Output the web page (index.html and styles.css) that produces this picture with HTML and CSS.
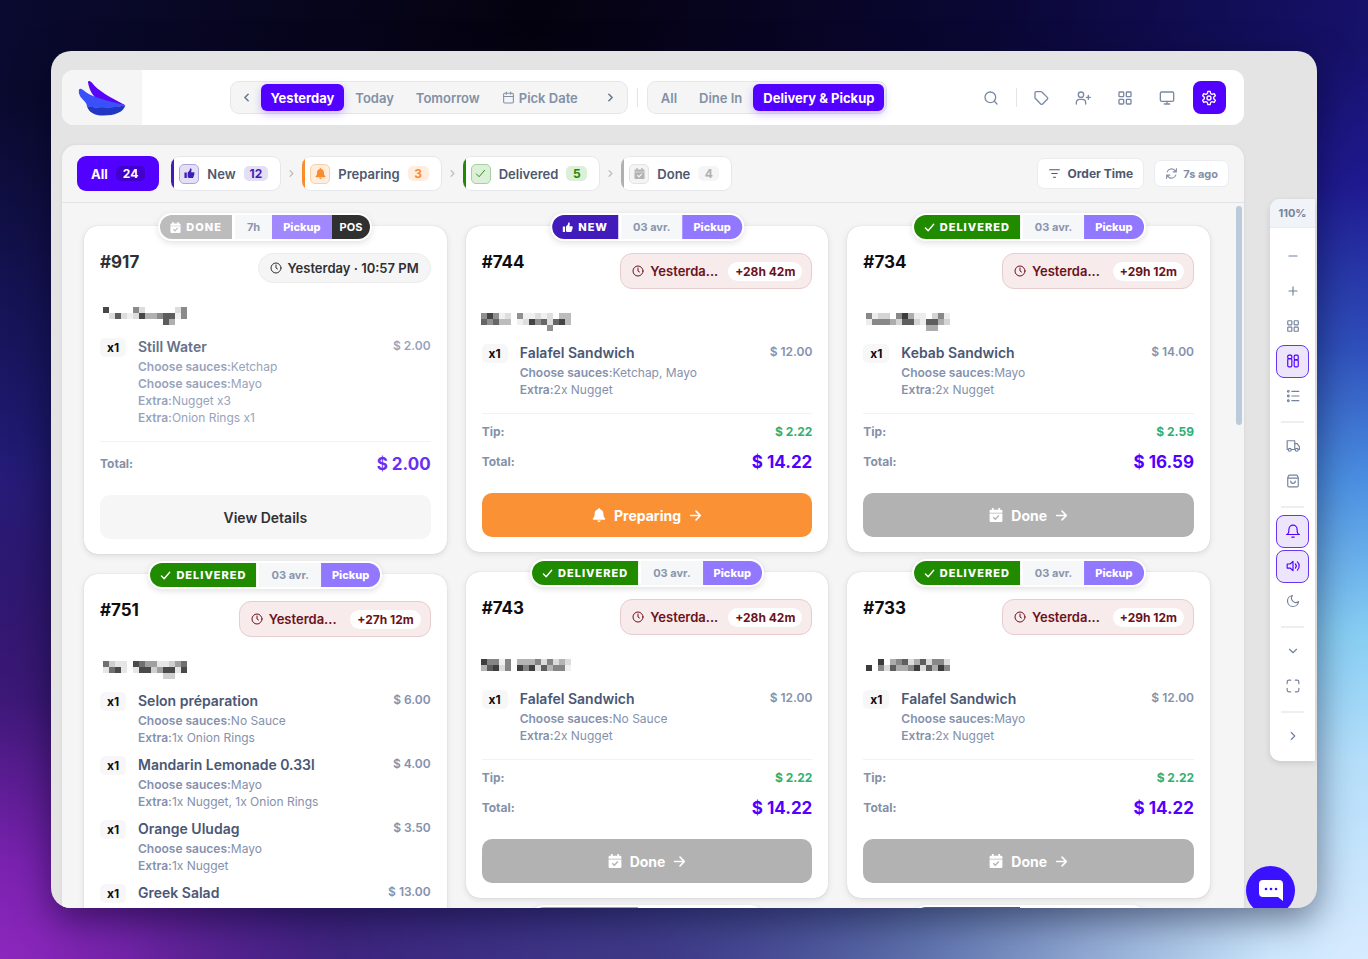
FILE: index.html
```html
<!DOCTYPE html>
<html lang="en">
<head>
<meta charset="UTF-8">
<meta name="viewport" content="width=device-width, initial-scale=1.0">
<title>Orders</title>
<link rel="stylesheet" href="styles.css">
</head>
<body>
<svg class="sprite" aria-hidden="true">
  <symbol id="i-left" viewBox="0 0 24 24"><path d="M15 6l-6 6 6 6"/></symbol>
  <symbol id="i-right" viewBox="0 0 24 24"><path d="M9 6l6 6-6 6"/></symbol>
  <symbol id="i-down" viewBox="0 0 24 24"><path d="M6 9l6 6 6-6"/></symbol>
  <symbol id="i-calendar" viewBox="0 0 24 24"><rect x="3" y="4" width="18" height="18" rx="2"/><path d="M16 2v4M8 2v4M3 10h18"/></symbol>
  <symbol id="i-search" viewBox="0 0 24 24"><circle cx="11" cy="11" r="8"/><path d="M21 21l-4-4"/></symbol>
  <symbol id="i-tag" viewBox="0 0 24 24"><path d="M3 4v7.500a2 2 0 0 0 .6 1.400l8 8a2 2 0 0 0 2.800 0l7-7a2 2 0 0 0 0-2.800l-8-8A2 2 0 0 0 12 2.500H4.500A1.500 1.500 0 0 0 3 4z"/></symbol>
  <symbol id="i-user" viewBox="0 0 24 24"><circle cx="9" cy="7" r="4"/><path d="M2 21v-2a5 5 0 0 1 5-5h4a5 5 0 0 1 5 5v2M20 8v6M17 11h6"/></symbol>
  <symbol id="i-grid" viewBox="0 0 24 24"><rect x="3" y="3" width="7" height="7" rx="1"/><rect x="14" y="3" width="7" height="7" rx="1"/><rect x="3" y="14" width="7" height="7" rx="1"/><rect x="14" y="14" width="7" height="7" rx="1"/></symbol>
  <symbol id="i-masonry" viewBox="0 0 24 24"><rect x="3" y="2" width="7" height="6" rx="2"/><rect x="14" y="2" width="7" height="8" rx="2"/><rect x="3" y="8" width="7" height="14" rx="2"/><rect x="14" y="10" width="7" height="12" rx="2"/></symbol>
  <symbol id="i-monitor" viewBox="0 0 24 24"><rect x="2" y="3" width="20" height="14" rx="2"/><path d="M8 21h8M12 17v4"/></symbol>
  <symbol id="i-gear" viewBox="0 0 24 24"><path d="M9.600 5.200L10.300 2h3.400l.7 3.200 2.200 1.300 3.200-1 1.700 3-2.500 2.200v2.600l2.500 2.200-1.700 3-3.200-1-2.200 1.300-.7 3.200h-3.400l-.7-3.200-2.200-1.300-3.200 1-1.700-3L5 13.300v-2.600L2.500 8.500l1.700-3 3.200 1z"/><circle cx="12" cy="12" r="3"/></symbol>
  <symbol id="i-sort" viewBox="0 0 24 24"><path d="M3 5h18M7 12h10M10 19h4"/></symbol>
  <symbol id="i-refresh" viewBox="0 0 24 24"><path d="M21 3v6h-6M3 21v-6h6M4 9a8.500 8.500 0 0 1 14-3l3 3M20 15a8.500 8.500 0 0 1-14 3l-3-3"/></symbol>
  <symbol id="i-clock" viewBox="0 0 24 24"><circle cx="12" cy="12" r="10"/><path d="M12 6v6l3 2"/></symbol>
  <symbol id="i-check" viewBox="0 0 24 24"><path d="M3 13l6 6L21 5"/></symbol>
  <symbol id="i-arrow" viewBox="0 0 24 24"><path d="M3 12h18M13 4l8 8-8 8"/></symbol>
  <symbol id="i-thumb" viewBox="0 0 24 24"><path class="solid" d="M1 10h5v12H1zM8 10l4-4 1-4c.3-1.500 4-1 3.500 2.500L15.500 9H21c3 0 2.500 3 1 3.500 1.200 1 .8 3-.6 3.500.9 1.300.2 2.800-1 3.200.4 1.500-.6 2.800-2.400 2.800h-5c-2 0-3-.6-5-2z"/></symbol>
  <symbol id="i-bellsolid" viewBox="0 0 24 24"><path class="solid" d="M12 0a1.500 1.500 0 0 0-1.500 1.500v.8C6.500 3 4.500 6.500 4.500 10c0 5-1.500 6.500-3 8-.8 1 0 2 1 2h19c1 0 1.800-1 1-2-1.500-1.500-3-3-3-8 0-3.500-2-7-6-7.700v-.8A1.500 1.500 0 0 0 12 0zM9 21.500a3 2.500 0 0 0 6 0z"/></symbol>
  <symbol id="i-calcheck" viewBox="0 0 24 24"><path class="solid" fill-rule="evenodd" d="M5 0h3v3h8V0h3v3h2a2 2 0 0 1 2 2v3H1V5a2 2 0 0 1 2-2h2zM1 9.500h22V22a2 2 0 0 1-2 2H3a2 2 0 0 1-2-2zM6.500 16.500l4.300 4.500 7-7.200-1.700-1.600-5.300 5.500-2.700-2.800z"/></symbol>
  <symbol id="i-minus" viewBox="0 0 24 24"><path d="M5 12h14"/></symbol>
  <symbol id="i-plus" viewBox="0 0 24 24"><path d="M5 12h14M12 5v14"/></symbol>
  <symbol id="i-list" viewBox="0 0 24 24"><path d="M10 4h12M10 12h12M10 20h12"/><circle cx="4" cy="4" r="1.500"/><circle cx="4" cy="12" r="1.500"/><circle cx="4" cy="20" r="1.500"/></symbol>
  <symbol id="i-truck" viewBox="0 0 24 24"><path d="M4 18H2V3h13v15H9M15 8h4l4 5v5h-2M15 18h1"/><circle cx="6.500" cy="18.500" r="2.500"/><circle cx="18.500" cy="18.500" r="2.500"/></symbol>
  <symbol id="i-bag" viewBox="0 0 24 24"><path d="M3 6l2-4h14l2 4v14a2 2 0 0 1-2 2H5a2 2 0 0 1-2-2zM3 7h18M8 12a4 4 0 0 0 8 0"/></symbol>
  <symbol id="i-bell" viewBox="0 0 24 24"><path d="M1 18c3 0 4-3 4-9a7 7 0 0 1 14 0c0 6 1 9 4 9zM10 22.500h4"/></symbol>
  <symbol id="i-sound" viewBox="0 0 24 24"><path d="M12 4L7 8.500H2v7h5l5 4.500zM16 8.500a5 5 0 0 1 0 7M19.500 5a9.500 9.500 0 0 1 0 14"/></symbol>
  <symbol id="i-moon" viewBox="0 0 24 24"><path d="M21.500 13A9.500 9.500 0 1 1 11 2.500 7.500 7.500 0 0 0 21.500 13z"/></symbol>
  <symbol id="i-full" viewBox="0 0 24 24"><path d="M8 2H5a3 3 0 0 0-3 3v3M16 2h3a3 3 0 0 1 3 3v3M8 22H5a3 3 0 0 1-3-3v-3M16 22h3a3 3 0 0 0 3-3v-3"/></symbol>
</svg>

<div class="window">
  <main class="main">
    <header class="topbar">
      <a class="logo" href="#" aria-label="Home">
        <svg viewBox="85 88 145 108" width="48" height="36">
          <path fill="#5a05f5" d="M115 94C116 88 124 90 134 104C158 128 195 146 228 164L160 156C135 146 120 125 115 94z"/>
          <path fill="#3a50fb" d="M88 116C92 110 102 118 109 125C135 142 170 150 228 164C190 173 150 176 112 167C112 158 105 152 98 145C88 134 86 124 88 116z"/>
          <path fill="#2137c4" d="M112 166C145 175 195 171 228 164C222 186 195 195 162 195C135 195 116 184 112 166z"/>
        </svg>
      </a>
      <nav class="switches">
        <div class="segment">
          <button class="step" aria-label="Previous day"><svg class="icon small bold"><use href="#i-left"/></svg></button>
          <button class="seg active">Yesterday</button>
          <button class="seg">Today</button>
          <button class="seg">Tomorrow</button>
          <button class="seg"><svg class="icon small"><use href="#i-calendar"/></svg>Pick Date</button>
          <button class="step last" aria-label="Next day"><svg class="icon small bold"><use href="#i-right"/></svg></button>
        </div>
        <span class="divider"></span>
        <div class="segment">
          <button class="seg">All</button>
          <button class="seg">Dine In</button>
          <button class="seg active">Delivery &amp; Pickup</button>
        </div>
      </nav>
      <div class="tools">
        <button class="tool" aria-label="Search"><svg class="icon"><use href="#i-search"/></svg></button>
        <span class="divider"></span>
        <button class="tool" aria-label="Offers"><svg class="icon"><use href="#i-tag"/></svg></button>
        <button class="tool" aria-label="Add customer"><svg class="icon"><use href="#i-user"/></svg></button>
        <button class="tool" aria-label="Apps"><svg class="icon"><use href="#i-grid"/></svg></button>
        <button class="tool" aria-label="Display"><svg class="icon"><use href="#i-monitor"/></svg></button>
        <button class="tool active" aria-label="Settings"><svg class="icon"><use href="#i-gear"/></svg></button>
      </div>
    </header>

    <section class="board">
      <div class="filters">
        <button class="filter all">All <span class="count">24</span></button>
        <button class="filter new"><span class="box"><svg class="icon tiny"><use href="#i-thumb"/></svg></span>New<span class="count">12</span></button>
        <svg class="icon crumb"><use href="#i-right"/></svg>
        <button class="filter preparing"><span class="box"><svg class="icon tiny"><use href="#i-bellsolid"/></svg></span>Preparing<span class="count">3</span></button>
        <svg class="icon crumb"><use href="#i-right"/></svg>
        <button class="filter delivered"><span class="box"><svg class="icon tiny"><use href="#i-check"/></svg></span>Delivered<span class="count">5</span></button>
        <svg class="icon crumb"><use href="#i-right"/></svg>
        <button class="filter done"><span class="box"><svg class="icon tiny"><use href="#i-calcheck"/></svg></span>Done<span class="count">4</span></button>
        <button class="sort"><svg class="icon small"><use href="#i-sort"/></svg>Order Time</button>
        <button class="refresh"><svg class="icon small"><use href="#i-refresh"/></svg>7s ago</button>
      </div>

      <div class="orders">
        <div class="column">
          <article class="card finished">
            <div class="badges">
              <span class="status done"><svg class="icon tiny"><use href="#i-calcheck"/></svg>DONE</span>
              <span class="date">7h</span><span class="type">Pickup</span><span class="pos">POS</span>
            </div>
            <div class="card-head">
              <h2>#917</h2>
              <div class="time"><svg class="icon clock"><use href="#i-clock"/></svg>Yesterday · 10:57 PM</div>
            </div>
            <svg class="customer" viewBox="0 0 14 3" width="84" height="18">
              <path stroke="#474747" d="M0 .5h1M6 1.500h1"/><path stroke="#5c5c5c" d="M2 1.500h1M10 1.500h2M10 2.500h1"/>
              <path stroke="#8a8a8a" d="M5 .5h1M13 .5h1M9 1.500h1M13 1.500h1"/><path stroke="#b0b0b0" d="M7 1.500h2M11 2.500h1"/>
              <path stroke="#dcdcdc" d="M1 1.500h1M3 1.500h1M5 1.500h1M6 .5h1M12 .5h1"/><path stroke="#efefef" d="M4 1.500h1M12 1.500h1"/>
            </svg>
            <ul class="items">
              <li><span class="qty">x1</span><div class="dish"><h3>Still Water</h3><p><b>Choose sauces:</b>Ketchap</p><p><b>Choose sauces:</b>Mayo</p><p><b>Extra:</b>Nugget x3</p><p><b>Extra:</b>Onion Rings x1</p></div><span class="price">$ 2.00</span></li>
            </ul>
            <div class="totals">
              <div class="total"><span>Total:</span><strong>$ 2.00</strong></div>
            </div>
            <button class="action view">View Details</button>
          </article>

          <article class="card">
            <div class="badges">
              <span class="status delivered"><svg class="icon tiny"><use href="#i-check"/></svg>DELIVERED</span>
              <span class="date">03 avr.</span><span class="type">Pickup</span>
            </div>
            <div class="card-head">
              <h2>#751</h2>
              <div class="time late"><svg class="icon clock"><use href="#i-clock"/></svg>Yesterda...<span class="delay">+27h 12m</span></div>
            </div>
            <svg class="customer" viewBox="0 0 14 3" width="84" height="18">
              <path stroke="#4a4a4a" d="M2 1.500h1M5 .5h1M6 1.500h2M10 1.500h2M13 1.500h1"/><path stroke="#707070" d="M0 .5h1M6 .5h1M1 1.500h1M13 .5h1"/>
              <path stroke="#a0a0a0" d="M7 .5h1M9 1.500h1M12 .5h1M8 .5h1"/><path stroke="#cfcfcf" d="M8 1.500h1M1 .5h1M10 2.500h2M11 .5h1"/>
              <path stroke="#e6e6e6" d="M2 .5h2M3 1.500h1M9 .5h2M0 1.500h1M12 1.500h1M5 1.500h1"/>
            </svg>
            <ul class="items">
              <li><span class="qty">x1</span><div class="dish"><h3>Selon préparation</h3><p><b>Choose sauces:</b>No Sauce</p><p><b>Extra:</b>1x Onion Rings</p></div><span class="price">$ 6.00</span></li>
              <li><span class="qty">x1</span><div class="dish"><h3>Mandarin Lemonade 0.33l</h3><p><b>Choose sauces:</b>Mayo</p><p><b>Extra:</b>1x Nugget, 1x Onion Rings</p></div><span class="price">$ 4.00</span></li>
              <li><span class="qty">x1</span><div class="dish"><h3>Orange Uludag</h3><p><b>Choose sauces:</b>Mayo</p><p><b>Extra:</b>1x Nugget</p></div><span class="price">$ 3.50</span></li>
              <li><span class="qty">x1</span><div class="dish"><h3>Greek Salad</h3><p><b>Choose sauces:</b>Mayo</p></div><span class="price">$ 13.00</span></li>
            </ul>
          </article>
        </div>

        <div class="column">
          <article class="card">
            <div class="badges">
              <span class="status new"><svg class="icon tiny"><use href="#i-thumb"/></svg>NEW</span>
              <span class="date">03 avr.</span><span class="type">Pickup</span>
            </div>
            <div class="card-head">
              <h2>#744</h2>
              <div class="time late"><svg class="icon clock"><use href="#i-clock"/></svg>Yesterda...<span class="delay">+28h 42m</span></div>
            </div>
            <svg class="customer wide" viewBox="0 0 15 3" width="90" height="18">
              <path stroke="#444" d="M1 .5h1M8 1.500h1M13 1.500h1"/><path stroke="#666" d="M0 1.500h1M2 1.500h1M10 1.500h1M12 1.500h1"/>
              <path stroke="#909090" d="M0 .5h1M2 .5h1M1 1.500h1M6 .5h1M9 1.500h1M11 2.500h1"/><path stroke="#bcbcbc" d="M3 1.500h2M13 .5h2M14 1.500h1"/>
              <path stroke="#dedede" d="M4 .5h1M7 1.500h1M9 .5h1M11 .5h1M11 1.500h1"/><path stroke="#f0f0f0" d="M3 .5h1M7 .5h2M10 .5h1M6 1.500h1"/>
            </svg>
            <ul class="items">
              <li><span class="qty">x1</span><div class="dish"><h3>Falafel Sandwich</h3><p><b>Choose sauces:</b>Ketchap, Mayo</p><p><b>Extra:</b>2x Nugget</p></div><span class="price">$ 12.00</span></li>
            </ul>
            <div class="totals">
              <div class="tip"><span>Tip:</span><strong>$ 2.22</strong></div>
              <div class="total"><span>Total:</span><strong>$ 14.22</strong></div>
            </div>
            <button class="action prepare"><svg class="icon"><use href="#i-bellsolid"/></svg>Preparing<svg class="icon arrow"><use href="#i-arrow"/></svg></button>
          </article>

          <article class="card">
            <div class="badges">
              <span class="status delivered"><svg class="icon tiny"><use href="#i-check"/></svg>DELIVERED</span>
              <span class="date">03 avr.</span><span class="type">Pickup</span>
            </div>
            <div class="card-head">
              <h2>#743</h2>
              <div class="time late"><svg class="icon clock"><use href="#i-clock"/></svg>Yesterda...<span class="delay">+28h 42m</span></div>
            </div>
            <svg class="customer wide" viewBox="0 0 15 3" width="90" height="18">
              <path stroke="#3e3e3e" d="M0 .5h1M2 1.500h1M8 1.500h1M6 1.500h1"/><path stroke="#5e5e5e" d="M1 1.500h1M10 1.500h1"/>
              <path stroke="#858585" d="M1 .5h2M4 .5h1M4 1.500h1M9 .5h1M11 .5h1M12 1.500h2M7 1.500h1"/><path stroke="#b4b4b4" d="M0 1.500h1M6 .5h2M8 .5h1M11 1.500h1M13 .5h1"/>
              <path stroke="#dcdcdc" d="M3 1.500h1M10 .5h1M12 .5h1M14 .5h1M9 1.500h1"/><path stroke="#f0f0f0" d="M3 .5h1M14 1.500h1"/>
            </svg>
            <ul class="items">
              <li><span class="qty">x1</span><div class="dish"><h3>Falafel Sandwich</h3><p><b>Choose sauces:</b>No Sauce</p><p><b>Extra:</b>2x Nugget</p></div><span class="price">$ 12.00</span></li>
            </ul>
            <div class="totals">
              <div class="tip"><span>Tip:</span><strong>$ 2.22</strong></div>
              <div class="total"><span>Total:</span><strong>$ 14.22</strong></div>
            </div>
            <button class="action finish"><svg class="icon"><use href="#i-calcheck"/></svg>Done<svg class="icon arrow"><use href="#i-arrow"/></svg></button>
          </article>

          <article class="card">
            <div class="badges next">
              <span class="status preparing"></span>
            </div>
          </article>
        </div>

        <div class="column">
          <article class="card">
            <div class="badges">
              <span class="status delivered"><svg class="icon tiny"><use href="#i-check"/></svg>DELIVERED</span>
              <span class="date">03 avr.</span><span class="type">Pickup</span>
            </div>
            <div class="card-head">
              <h2>#734</h2>
              <div class="time late"><svg class="icon clock"><use href="#i-clock"/></svg>Yesterda...<span class="delay">+29h 12m</span></div>
            </div>
            <svg class="customer" viewBox="0 0 14 3" width="84" height="18">
              <path stroke="#3c3c3c" d="M6 .5h1"/><path stroke="#5e5e5e" d="M7 1.500h1M10 1.500h2M6 1.500h1"/>
              <path stroke="#888" d="M0 .5h1M1 1.500h3M5 .5h1M12 .5h1"/><path stroke="#acacac" d="M4 1.500h1M7 .5h1M10 2.500h2M12 1.500h1"/>
              <path stroke="#d4d4d4" d="M2 .5h2M5 1.500h1M8 1.500h1M13 1.500h1M11 .5h1"/><path stroke="#ececec" d="M0 1.500h1M1 .5h1M8 .5h2M9 1.500h1M13 .5h1"/>
            </svg>
            <ul class="items">
              <li><span class="qty">x1</span><div class="dish"><h3>Kebab Sandwich</h3><p><b>Choose sauces:</b>Mayo</p><p><b>Extra:</b>2x Nugget</p></div><span class="price">$ 14.00</span></li>
            </ul>
            <div class="totals">
              <div class="tip"><span>Tip:</span><strong>$ 2.59</strong></div>
              <div class="total"><span>Total:</span><strong>$ 16.59</strong></div>
            </div>
            <button class="action finish"><svg class="icon"><use href="#i-calcheck"/></svg>Done<svg class="icon arrow"><use href="#i-arrow"/></svg></button>
          </article>

          <article class="card">
            <div class="badges">
              <span class="status delivered"><svg class="icon tiny"><use href="#i-check"/></svg>DELIVERED</span>
              <span class="date">03 avr.</span><span class="type">Pickup</span>
            </div>
            <div class="card-head">
              <h2>#733</h2>
              <div class="time late"><svg class="icon clock"><use href="#i-clock"/></svg>Yesterda...<span class="delay">+29h 12m</span></div>
            </div>
            <svg class="customer" viewBox="0 0 14 3" width="84" height="18">
              <path stroke="#3c3c3c" d="M2 .5h1M0 1.500h1M8 1.500h1M12 1.500h1"/><path stroke="#5e5e5e" d="M4 1.500h1M6 .5h1M9 .5h1M10 1.500h1"/>
              <path stroke="#888" d="M2 1.500h1M5 .5h1M7 1.500h1M11 .5h2M13 1.500h1"/><path stroke="#acacac" d="M4 .5h1M5 1.500h2M8 .5h1M11 1.500h1"/>
              <path stroke="#dcdcdc" d="M3 1.500h1M7 .5h1M10 .5h1M13 .5h1M9 1.500h1"/>
            </svg>
            <ul class="items">
              <li><span class="qty">x1</span><div class="dish"><h3>Falafel Sandwich</h3><p><b>Choose sauces:</b>Mayo</p><p><b>Extra:</b>2x Nugget</p></div><span class="price">$ 12.00</span></li>
            </ul>
            <div class="totals">
              <div class="tip"><span>Tip:</span><strong>$ 2.22</strong></div>
              <div class="total"><span>Total:</span><strong>$ 14.22</strong></div>
            </div>
            <button class="action finish"><svg class="icon"><use href="#i-calcheck"/></svg>Done<svg class="icon arrow"><use href="#i-arrow"/></svg></button>
          </article>

          <article class="card">
            <div class="badges next">
              <span class="status delivered"></span>
            </div>
          </article>
        </div>
        <span class="scrollbar"></span>
      </div>
    </section>
  </main>

  <aside class="rail">
    <div class="zoom">110%</div>
    <div class="rail-items">
      <button class="rail-btn" aria-label="Zoom out"><svg class="icon"><use href="#i-minus"/></svg></button>
      <button class="rail-btn" aria-label="Zoom in"><svg class="icon"><use href="#i-plus"/></svg></button>
      <button class="rail-btn" aria-label="Grid view"><svg class="icon"><use href="#i-grid"/></svg></button>
      <button class="rail-btn active" aria-label="Masonry view"><svg class="icon"><use href="#i-masonry"/></svg></button>
      <button class="rail-btn" aria-label="List view"><svg class="icon"><use href="#i-list"/></svg></button>
      <hr>
      <button class="rail-btn" aria-label="Delivery"><svg class="icon"><use href="#i-truck"/></svg></button>
      <button class="rail-btn" aria-label="Pickup"><svg class="icon"><use href="#i-bag"/></svg></button>
      <hr>
      <button class="rail-btn active" aria-label="Notifications"><svg class="icon"><use href="#i-bell"/></svg></button>
      <button class="rail-btn active" aria-label="Sound"><svg class="icon"><use href="#i-sound"/></svg></button>
      <button class="rail-btn" aria-label="Dark mode"><svg class="icon"><use href="#i-moon"/></svg></button>
      <hr>
      <button class="rail-btn" aria-label="More"><svg class="icon"><use href="#i-down"/></svg></button>
      <button class="rail-btn" aria-label="Full screen"><svg class="icon"><use href="#i-full"/></svg></button>
      <hr>
      <button class="rail-btn" aria-label="Collapse"><svg class="icon"><use href="#i-right"/></svg></button>
    </div>
  </aside>

  <button class="chat" aria-label="Open chat">
    <svg viewBox="0 0 24 21" width="24" height="21"><path fill="#fff" d="M4 0h16a4 4 0 0 1 4 4v17l-5-4H4a4 4 0 0 1-4-4V4a4 4 0 0 1 4-4z"/><g fill="#3b12ff"><circle cx="7" cy="9" r="1.300"/><circle cx="12" cy="9" r="1.300"/><circle cx="17" cy="9" r="1.300"/></g></svg>
  </button>
</div>
</body>
</html>
```
FILE: styles.css
```css
* {
  box-sizing: border-box;
}

body {
  margin: 0;
  padding: 51px;
  height: 100vh;
  font-family: Inter, "Liberation Sans", sans-serif;
  color: #0d0d12;
  background:
    radial-gradient(ellipse 45% 32% at 48% 100%, rgba(62, 44, 120, 0.85) 0%, rgba(62, 44, 120, 0.6) 40%, rgba(62, 44, 120, 0) 100%),
    radial-gradient(ellipse 50% 55% at 0% 100%, #8c27bd 0%, #7a22b0 18%, rgba(70, 26, 130, 0.8) 50%, rgba(30, 24, 100, 0) 100%),
    radial-gradient(ellipse 95% 95% at 100% 100%, #d8ebff 0%, #b4defa 22%, #86cdf3 36%, #4a8de0 53%, #2f50bb 67%, #1f1a90 85%, rgba(28, 22, 130, 0) 100%),
    radial-gradient(ellipse 25% 40% at 0% 50%, #211c78 0%, rgba(33, 28, 120, 0) 100%),
    linear-gradient(100deg, #0a0a30 0%, #05020f 35%, #0a0735 65%, #1c1682 100%);
}

h2, h3, p, ul {
  margin: 0;
  padding: 0;
}

button {
  font-family: inherit;
  border: none;
  background: none;
  padding: 0;
  color: inherit;
  cursor: pointer;
  display: flex;
  align-items: center;
  justify-content: center;
  white-space: nowrap;
}

.sprite {
  display: none;
}

.icon {
  width: 16px;
  height: 16px;
  flex: none;
  fill: none;
  stroke: currentColor;
  stroke-width: 2;
  stroke-linecap: round;
  stroke-linejoin: round;
}

.icon.small {
  width: 13px;
  height: 13px;
}

.icon.clock {
  width: 12px;
  height: 12px;
}

.icon.tiny {
  width: 11px;
  height: 11px;
}

.icon.bold {
  stroke-width: 3;
}

.solid {
  fill: currentColor;
  stroke: none;
}

.window {
  position: relative;
  display: flex;
  gap: 26px;
  height: 100%;
  padding: 0 2px 0 11px;
  overflow: hidden;
  background: #e4e4e4;
  border-radius: 20px;
  box-shadow: 0 12px 36px rgba(0, 0, 30, 0.5);
}

.main {
  flex: 1;
  min-width: 0;
  display: flex;
  flex-direction: column;
  gap: 20px;
  padding-top: 19px;
}

/* top bar */
.topbar {
  display: flex;
  align-items: center;
  justify-content: space-between;
  height: 55px;
  flex: none;
  padding-right: 18px;
  background: #fff;
  border-radius: 12px;
}

.logo {
  display: flex;
  align-items: center;
  justify-content: center;
  width: 80px;
  height: 100%;
  background: #f5f5f5;
  border-radius: 12px 0 0 12px;
}

.switches {
  display: flex;
  align-items: center;
  gap: 9px;
}

.segment {
  display: flex;
  align-items: center;
  height: 33px;
  padding: 0 2px;
  background: #f5f5f5;
  border: 1px solid #e4e6ea;
  border-radius: 9px;
}

.seg {
  gap: 4px;
  height: 27px;
  padding: 0 11px;
  font-size: 13px;
  font-weight: 600;
  color: #8290a6;
  border-radius: 6px;
}

.seg.active {
  padding: 0 10px;
  background: #5200ff;
  color: #fff;
  font-weight: 700;
  box-shadow: 0 3px 8px rgba(82, 0, 255, 0.25);
}

.step {
  width: 28px;
  height: 27px;
  color: #6c7a92;
}

.step.last {
  margin-left: 8px;
}

.divider {
  width: 1px;
  height: 19px;
  background: #e2e5ea;
}

.tools {
  display: flex;
  align-items: center;
  gap: 9px;
}

.tools .divider {
  margin: 0 -1px;
}

.tool {
  width: 33px;
  height: 33px;
  color: #7b89a5;
  border-radius: 8px;
}

.tool.active {
  background: #5200ff;
  color: #fff;
}

/* board */
.board {
  flex: 1;
  min-height: 0;
  display: flex;
  flex-direction: column;
  background: #f5f5f5;
  border-radius: 14px 14px 0 0;
  box-shadow: 0 0 4px rgba(0, 0, 0, 0.06);
}

.filters {
  display: flex;
  align-items: center;
  height: 58px;
  flex: none;
  padding: 0 15px;
  border-bottom: 1px solid #e2e3e6;
}

.filter {
  --accent: #b0b0b0;
  gap: 8px;
  height: 35px;
  padding: 0 12px 0 8px;
  font-size: 13px;
  font-weight: 600;
  color: #4c5870;
  background: linear-gradient(to right, var(--accent) 3px, #fff 3px);
  border: 1px solid #e6e7eb;
  border-left: none;
  border-radius: 9px;
}

.filter.all {
  margin-right: 12px;
  padding: 0 14px;
  font-weight: 700;
  color: #fff;
  background: #5200ff;
  border: none;
}

.count {
  min-width: 21px;
  padding: 0 6px;
  line-height: 15px;
  border-radius: 5px;
  font-size: 12px;
  font-weight: 700;
}

.all .count {
  padding: 0 7px;
  background: #4100cc;
}

.box {
  display: flex;
  align-items: center;
  justify-content: center;
  width: 20px;
  height: 20px;
  border: 1px solid;
  border-radius: 5px;
}

.filter.new { --accent: #421cbb; }
.new .box { color: #421cbb; background: #e3dff4; border-color: #b0a4e0; }
.new .count { color: #421cbb; background: #e3dff4; }

.filter.preparing { --accent: #fb8c2e; }
.preparing .box { color: #fb8c2e; background: #ffeddf; border-color: #fdcfa6; }
.preparing .count { color: #fb8c2e; background: #ffeddf; }

.filter.delivered { --accent: #218b00; }
.delivered .box { color: #218b00; background: #dcefd8; border-color: #a5d19a; }
.delivered .count { color: #218b00; background: #dcefd8; }

.filter.done .box { color: #b3b3b3; background: #f4f4f4; border-color: #e3e3e3; }
.filter.done .count { color: #b0b0b0; background: #f5f5f5; }

.crumb {
  width: 11px;
  height: 11px;
  margin: 0 5px;
  stroke-width: 3;
  color: #c0c0c4;
}

.sort,
.refresh {
  background: #fff;
  border: 1px solid #ebecef;
  border-radius: 7px;
}

.sort {
  gap: 7px;
  height: 31px;
  margin-left: auto;
  margin-right: 10px;
  padding: 0 10px;
  font-size: 12px;
  font-weight: 700;
  color: #4c5870;
}

.refresh {
  gap: 5px;
  height: 27px;
  padding: 0 10px;
  font-size: 11px;
  font-weight: 700;
  color: #8290a6;
}

.orders {
  position: relative;
  flex: 1;
  min-height: 0;
  display: flex;
  gap: 19px;
  padding: 23px 34px 0 22px;
  overflow: hidden;
}

.scrollbar {
  position: absolute;
  top: 3px;
  right: 2px;
  width: 6px;
  height: 219px;
  background: #bccbdb;
  border-radius: 3px;
}

.column {
  flex: 1;
  min-width: 0;
  display: flex;
  flex-direction: column;
  gap: 20px;
}

.card {
  position: relative;
  padding: 27px 16px 15px;
  background: #fff;
  border-radius: 14px;
  box-shadow: 0 0 1px rgba(0, 0, 0, 0.2), 0 2px 6px rgba(0, 0, 0, 0.1);
}

/* status strip on the top edge of a card */
.badges {
  position: absolute;
  top: -13px;
  left: 50%;
  transform: translateX(-50%);
  display: flex;
  height: 28px;
  border: 2px solid #fff;
  border-radius: 14px;
  background: #fff;
  box-shadow: 0 2px 6px rgba(0, 0, 0, 0.12);
  font-size: 11px;
  font-weight: 700;
  line-height: 24px;
  white-space: nowrap;
}

.badges .status {
  display: flex;
  align-items: center;
  gap: 5px;
  padding: 0 10px;
  margin-right: 3px;
  font-weight: 800;
  letter-spacing: 1px;
  color: #fff;
  border-radius: 12px 0 0 12px;
}

.badges.next {
  width: 234px;
}

.badges.next .status {
  width: 106px;
}

.badges .delivered .icon {
  stroke-width: 3;
}

.status.done { background: #bcbcbc; }
.status.new { background: #421cbb; }
.status.delivered { background: #218b00; }
.status.preparing { background: #fb9135; }

.badges .date {
  padding: 0 12px;
  color: #8896ad;
  background: #f6f7f9;
}

.badges .type {
  padding: 0 11px;
  font-weight: 800;
  color: #fff;
  background: #9277ff;
}

.finished .badges .type {
  background: #a188ff;
}

.badges .type:last-child {
  border-radius: 0 12px 12px 0;
}

.badges .pos {
  padding: 0 8px;
  color: #fff;
  background: #303030;
  border-radius: 0 12px 12px 0;
}

.card-head {
  display: flex;
  justify-content: space-between;
  align-items: flex-start;
}

.card h2 {
  font-size: 17px;
  line-height: 19px;
  font-weight: 700;
}

.finished h2 {
  color: #303034;
}

.time {
  display: flex;
  align-items: center;
  gap: 6px;
  height: 30px;
  padding: 0 11px;
  font-size: 13px;
  font-weight: 600;
  color: #303034;
  background: #f5f5f5;
  border: 1px solid #ececec;
  border-radius: 15px;
}

.time.late {
  width: 192px;
  height: 36px;
  padding-right: 9px;
  color: #6b1220;
  background: #f7ebeb;
  border-color: #e6cccf;
  border-radius: 12px;
}

.delay {
  margin-left: auto;
  padding: 0 7px;
  line-height: 19px;
  font-size: 12px;
  font-weight: 700;
  background: #fff;
  border-radius: 10px;
}

.customer {
  display: block;
  margin: 24px 0 11px 3px;
  shape-rendering: crispEdges;
}

.customer.wide {
  margin-left: -1px;
}

.items {
  display: flex;
  flex-direction: column;
  gap: 8px;
  list-style: none;
}

.items li {
  display: flex;
  align-items: flex-start;
}

.qty {
  width: 26px;
  margin: 2px 12px 0 0;
  line-height: 19px;
  text-align: center;
  font-size: 12px;
  font-weight: 700;
  background: #f7f7f7;
  border-radius: 5px;
}

.dish {
  flex: 1;
}

.dish h3 {
  font-size: 14px;
  line-height: 22px;
  font-weight: 600;
  color: #4a5775;
}

.dish p {
  font-size: 12px;
  line-height: 17px;
  color: #8491ad;
}

.dish b {
  font-weight: 600;
}

.price {
  font-size: 12px;
  line-height: 20px;
  font-weight: 600;
  color: #8491ad;
}

.finished .dish h3 {
  color: #66718a;
}

.finished .dish p,
.finished .price {
  color: #98a3bb;
}

.totals {
  display: flex;
  flex-direction: column;
  gap: 10px;
  margin: 15px 0 19px;
  padding-top: 10px;
  border-top: 1px solid #f1f2f4;
}

.tip,
.total {
  display: flex;
  justify-content: space-between;
  align-items: center;
  line-height: 16px;
  font-size: 12px;
  font-weight: 700;
  color: #8491a8;
}

.tip strong {
  font-weight: 700;
  color: #2fb070;
}

.total {
  line-height: 24px;
}

.total strong {
  font-size: 17px;
  font-weight: 700;
  color: #5200ff;
}

.finished .total strong {
  color: #6a2ff5;
}

.action {
  gap: 8px;
  width: 100%;
  height: 44px;
  font-size: 14px;
  font-weight: 700;
  color: #fff;
  border-radius: 10px;
}

.action .icon {
  width: 14px;
  height: 14px;
}

.action .arrow {
  width: 13px;
  height: 13px;
  stroke-width: 3;
}

.action.view {
  font-weight: 600;
  color: #303034;
  background: #f6f6f6;
}

.action.prepare {
  background: #fb9135;
}

.action.finish {
  background: #b2b2b2;
}

/* right rail */
.rail {
  align-self: center;
  width: 45px;
  flex: none;
  background: #fff;
  border-radius: 10px 0 0 10px;
  box-shadow: 0 2px 6px rgba(0, 0, 0, 0.12);
}

.zoom {
  height: 29px;
  line-height: 29px;
  text-align: center;
  font-size: 11px;
  font-weight: 700;
  color: #76849a;
  background: #f0f3f7;
  border-bottom: 1px solid #e8ebf0;
  border-radius: 10px 0 0 0;
}

.rail-items {
  display: flex;
  flex-direction: column;
  align-items: center;
  gap: 2px;
  padding: 12px 0 8px;
}

.rail-btn {
  width: 33px;
  height: 33px;
  color: #75829c;
  border-radius: 8px;
}

.rail-btn .icon {
  width: 14px;
  height: 14px;
}

.rail-btn.active {
  color: #5200ff;
  background: #ece5fc;
  border: 1px solid #6a35f0;
}

.rail hr {
  width: 23px;
  height: 2px;
  margin: 6px 0 5px;
  border: none;
  background: #eceef1;
}

.chat {
  position: absolute;
  right: 22px;
  bottom: -7px;
  width: 49px;
  height: 49px;
  background: #3b12ff;
  border-radius: 50%;
}
```
